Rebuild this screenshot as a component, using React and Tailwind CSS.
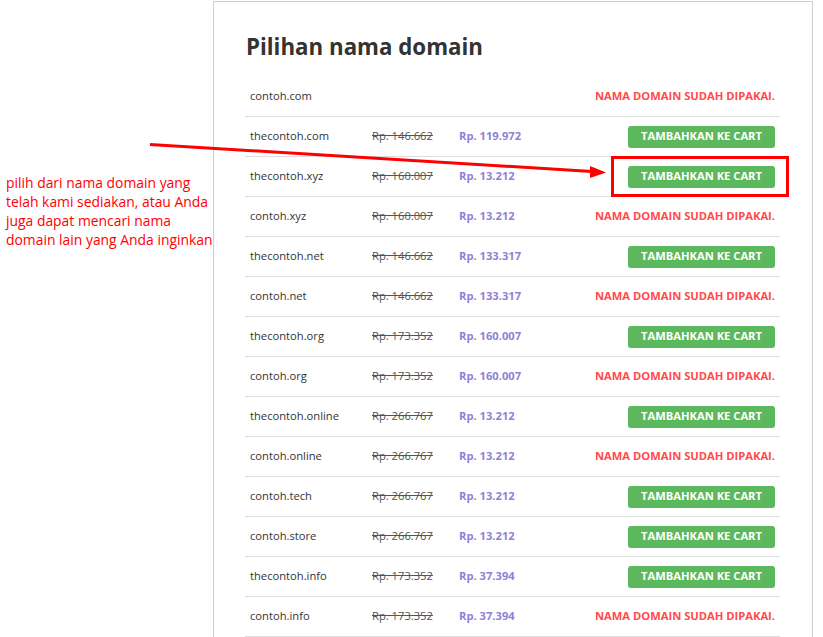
import React from 'react'

const rows = [
  { name: 'contoh.com', taken: true },
  { name: 'thecontoh.com', old: 'Rp. 146.662', price: 'Rp. 119.972' },
  { name: 'thecontoh.xyz', old: 'Rp. 160.007', price: 'Rp. 13.212', marked: true },
  { name: 'contoh.xyz', old: 'Rp. 160.007', price: 'Rp. 13.212', taken: true },
  { name: 'thecontoh.net', old: 'Rp. 146.662', price: 'Rp. 133.317' },
  { name: 'contoh.net', old: 'Rp. 146.662', price: 'Rp. 133.317', taken: true },
  { name: 'thecontoh.org', old: 'Rp. 173.352', price: 'Rp. 160.007' },
  { name: 'contoh.org', old: 'Rp. 173.352', price: 'Rp. 160.007', taken: true },
  { name: 'thecontoh.online', old: 'Rp. 266.767', price: 'Rp. 13.212' },
  { name: 'contoh.online', old: 'Rp. 266.767', price: 'Rp. 13.212', taken: true },
  { name: 'contoh.tech', old: 'Rp. 266.767', price: 'Rp. 13.212' },
  { name: 'contoh.store', old: 'Rp. 266.767', price: 'Rp. 13.212' },
  { name: 'thecontoh.info', old: 'Rp. 173.352', price: 'Rp. 37.394' },
  { name: 'contoh.info', old: 'Rp. 173.352', price: 'Rp. 37.394', taken: true },
]

function DomainRow({ row }) {
  return (
    <div className="flex h-10 items-center border-b border-[#dddddd] pl-[5px] pr-[5px] text-[11.2px]">
      <div className="w-[122px] text-[#333]">{row.name}</div>
      <div className="w-[87px] text-[#555] line-through">{row.old}</div>
      <div className="font-bold text-[#8f80d8]">{row.price}</div>
      <div className="ml-auto">
        {row.taken ? (
          <span className="text-[11.2px] font-bold uppercase text-[#ff4a4a]">Nama domain sudah dipakai.</span>
        ) : (
          <div className="relative">
            <button className="h-[22px] w-[147px] rounded-[3px] bg-[#5cb85c] text-[11.2px] font-bold uppercase text-white">
              Tambahkan ke cart
            </button>
            {row.marked && (
              <div className="absolute -left-[17px] -top-[10px] h-[41px] w-[178px] border-[3px] border-[#ff0000]" />
            )}
          </div>
        )}
      </div>
    </div>
  )
}

export default function App() {
  return (
    <div className="relative h-[637px] w-[823px] overflow-hidden bg-white" style={{ fontFamily: '"Open Sans", sans-serif' }}>
      <div className="flex h-full">
        <div className="w-[213px] shrink-0 whitespace-nowrap pl-[6px] pt-[173px] text-[13.9px] leading-[19px] text-[#ff0000]">
          pilih dari nama domain yang<br />
          telah kami sediakan, atau Anda<br />
          juga dapat mencari nama<br />
          domain lain yang Anda inginkan
        </div>
        <div className="mt-[1px] w-[600px] shrink-0 border-x border-t border-[#cfcfcf] pl-[31px] pr-[32px]">
          <h1 className="flex h-[75px] items-center pl-[1px] pt-[15px] text-[22.3px] font-bold text-[#333]">Pilihan nama domain</h1>
          {rows.map((row) => (
            <DomainRow key={row.name} row={row} />
          ))}
        </div>
      </div>
      <svg className="pointer-events-none absolute left-0 top-0" width="823" height="637">
        <line x1="150" y1="144.5" x2="592" y2="171.5" stroke="#ff0000" strokeWidth="3" />
        <polygon points="606,172.5 590,166 590,178" fill="#ff0000" />
      </svg>
    </div>
  )
}
